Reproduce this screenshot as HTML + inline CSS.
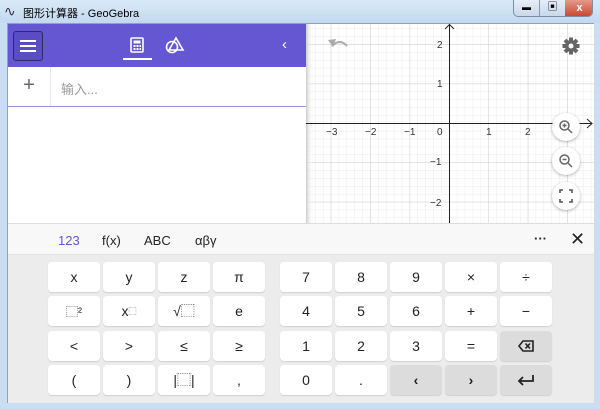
<!DOCTYPE html>
<html><head><meta charset="utf-8"><style>
*{margin:0;padding:0;box-sizing:border-box}
body{width:600px;height:409px;overflow:hidden;background:#c9def3;font-family:"Liberation Sans","Noto Sans CJK SC",sans-serif;position:relative}
.a{position:absolute}
.k{position:absolute;width:52px;height:30px;background:#fff;border-radius:4px;box-shadow:0 1px 1px rgba(0,0,0,.12);font-size:14px;color:#222;display:flex;align-items:center;justify-content:center}
.g{background:#dcdcdc}
.zb{position:absolute;width:28px;height:28px;border-radius:50%;background:#fff;box-shadow:0 1px 3px rgba(0,0,0,.3);display:flex;align-items:center;justify-content:center}
</style></head><body>
<div class="a" style="left:0;top:0;width:600px;height:23px;background:linear-gradient(#d9e9f8,#c3d9f0)"></div>
<div class="a" style="left:4px;top:3px;font-size:14px;color:#334">∿</div>
<div class="a" style="left:23px;top:5px;font-size:11px;color:#000">图形计算器 - GeoGebra</div>
<div class="a" style="left:513px;top:0;width:80px;height:17px;border:1px solid #7c8ea6;border-top:none;border-radius:0 0 5px 5px;background:linear-gradient(#e6eef8,#c9d8ea);overflow:hidden">
<div class="a" style="left:0;top:0;width:26px;height:17px;border-right:1px solid #8899b0;font-size:9px;text-align:center;line-height:15px">▬</div>
<div class="a" style="left:26px;top:0;width:25px;height:17px;font-size:10px;text-align:center;line-height:16px">▣</div>
<div class="a" style="left:51px;top:0;width:29px;height:17px;background:linear-gradient(#e69a8a,#c8442c);color:#fff;font-weight:bold;font-size:11px;text-align:center;line-height:16px">x</div></div>
<div class="a" style="left:7px;top:23px;width:587px;height:380px;background:#fff;border:1px solid #8aa4c0"></div>
<div class="a" style="left:8px;top:24px;width:298px;height:43px;background:#6557d2"></div>
<div class="a" style="left:13px;top:31px;width:30px;height:30px;border:1px solid #2f2a66;border-radius:3px;background:#5a4dc4"></div>
<div class="a" style="left:20px;top:40px;width:16px;height:2px;background:#fff;box-shadow:0 5px 0 #fff,0 10px 0 #fff"></div>
<svg class="a" style="left:130px;top:37px" width="14" height="16"><rect x="1" y="1" width="12" height="14" rx="1" fill="none" stroke="#fff" stroke-width="1.6"/><rect x="3.5" y="3.5" width="7" height="3" fill="#fff"/><g fill="#fff"><rect x="3.5" y="8" width="2" height="2"/><rect x="6.5" y="8" width="2" height="2"/><rect x="9.5" y="8" width="1.5" height="2"/><rect x="3.5" y="11" width="2" height="2"/><rect x="6.5" y="11" width="2" height="2"/><rect x="9.5" y="11" width="1.5" height="2"/></g></svg>
<div class="a" style="left:123px;top:58px;width:29px;height:2px;background:#fff"></div>
<svg class="a" style="left:165px;top:36px" width="20" height="18"><circle cx="7" cy="11" r="5.5" fill="none" stroke="#fff" stroke-width="1.6"/><path d="M11 2 L18 14 L4 14 Z" fill="none" stroke="#fff" stroke-width="1.6"/></svg>
<div class="a" style="left:282px;top:36px;color:#fff;font-size:15px">‹</div>
<div class="a" style="left:8px;top:67px;width:43px;height:39px;border-right:1px solid #e6e6e6;text-align:center;font-size:20px;color:#666;line-height:37px">+</div>
<div class="a" style="left:61px;top:79px;font-size:13px;color:#999">输入...</div>
<div class="a" style="left:8px;top:106px;width:298px;height:1px;background:#9a90e0"></div>
<svg class="a" style="left:306px;top:24px" width="288" height="199">
<defs>
<pattern id="mi" x="24.8" y="20.2" width="7.88" height="7.88" patternUnits="userSpaceOnUse"><path d="M0 0V7.88M0 0H7.88" stroke="#ebebeb" stroke-width="1" fill="none"/></pattern>
<pattern id="ma" x="24.8" y="20.2" width="39.4" height="39.4" patternUnits="userSpaceOnUse"><path d="M0 0V39.4M0 0H39.4" stroke="#cfcfcf" stroke-width="1" fill="none"/></pattern>
<linearGradient id="sh" x1="0" x2="1"><stop offset="0" stop-color="#ccc"/><stop offset="1" stop-color="#fff" stop-opacity="0"/></linearGradient>
</defs>
<rect width="288" height="199" fill="#fff"/>
<rect width="288" height="199" fill="url(#mi)"/>
<rect width="288" height="199" fill="url(#ma)"/>
<rect width="7" height="199" fill="url(#sh)"/>
<line x1="0" y1="99.5" x2="286" y2="99.5" stroke="#222" stroke-width="1"/>
<line x1="143.5" y1="0" x2="143.5" y2="199" stroke="#222" stroke-width="1"/>
<path d="M281 95 L286 99.5 L281 104 M139 5 L143.5 0.5 L148 5" stroke="#222" fill="none"/>
<g font-size="10" fill="#333" font-family="Liberation Sans">
<text x="20" y="111">−3</text><text x="59" y="111">−2</text><text x="98" y="111">−1</text><text x="131" y="111">0</text><text x="180" y="111">1</text><text x="219" y="111">2</text>
<text x="131" y="24">2</text><text x="131" y="63">1</text><text x="124" y="141">−1</text><text x="124" y="182">−2</text>
</g>
<path d="M26 22 Q34 14 41 22" stroke="#aaa" stroke-width="2" fill="none"/><path d="M22 16 L27 23 L30 15 Z" fill="#aaa"/>
<g transform="translate(265,22)" fill="#666"><circle r="6"/>
<rect x="-2" y="-8.5" width="4" height="17"/><rect x="-2" y="-8.5" width="4" height="17" transform="rotate(45)"/><rect x="-2" y="-8.5" width="4" height="17" transform="rotate(90)"/><rect x="-2" y="-8.5" width="4" height="17" transform="rotate(135)"/>
<circle r="2.5" fill="#fff"/></g>
</svg>
<div class="zb" style="left:552px;top:113px"><svg width="16" height="16"><circle cx="6.5" cy="6.5" r="4.5" fill="none" stroke="#666" stroke-width="1.5"/><path d="M10 10 L14 14 M4.5 6.5H8.5M6.5 4.5V8.5" stroke="#666" stroke-width="1.5"/></svg></div>
<div class="zb" style="left:552px;top:147px"><svg width="16" height="16"><circle cx="6.5" cy="6.5" r="4.5" fill="none" stroke="#666" stroke-width="1.5"/><path d="M10 10 L14 14 M4.5 6.5H8.5" stroke="#666" stroke-width="1.5"/></svg></div>
<div class="zb" style="left:552px;top:182px"><svg width="14" height="14"><path d="M1 4V1H4M10 1H13V4M13 10V13H10M4 13H1V10" stroke="#555" stroke-width="1.6" fill="none"/></svg></div>
<div class="a" style="left:8px;top:223px;width:586px;height:32px;background:#f8f8f8;border-top:1px solid #ddd;border-bottom:1px solid #e4e4e4"></div>
<div class="a" style="left:58px;top:233px;font-size:13px;color:#6557d2">123</div>
<div class="a" style="left:102px;top:233px;font-size:13px;color:#222">f(x)</div>
<div class="a" style="left:144px;top:233px;font-size:13px;color:#222">ABC</div>
<div class="a" style="left:195px;top:233px;font-size:13px;color:#222">αβγ</div>
<div class="a" style="left:534px;top:231px;font-size:13px;color:#222;font-weight:bold">···</div>
<div class="a" style="left:570px;top:229px;font-size:18px;color:#222">✕</div>
<div class="a" style="left:8px;top:255px;width:586px;height:148px;background:#ececec"></div>
<div class="k" style="left:48px;top:262px">x</div><div class="k" style="left:103px;top:262px">y</div><div class="k" style="left:158px;top:262px">z</div><div class="k" style="left:213px;top:262px">π</div>
<div class="k" style="left:48px;top:296px;font-size:12px">⬚²</div><div class="k" style="left:103px;top:296px">x<sup style="font-size:8px">⬚</sup></div><div class="k" style="left:158px;top:296px">√⬚</div><div class="k" style="left:213px;top:296px">e</div>
<div class="k" style="left:48px;top:331px">&lt;</div><div class="k" style="left:103px;top:331px">&gt;</div><div class="k" style="left:158px;top:331px">≤</div><div class="k" style="left:213px;top:331px">≥</div>
<div class="k" style="left:48px;top:365px">(</div><div class="k" style="left:103px;top:365px">)</div><div class="k" style="left:158px;top:365px">|⬚|</div><div class="k" style="left:213px;top:365px">,</div>
<div class="k" style="left:280px;top:262px">7</div><div class="k" style="left:335px;top:262px">8</div><div class="k" style="left:390px;top:262px">9</div><div class="k" style="left:445px;top:262px">×</div><div class="k" style="left:500px;top:262px">÷</div>
<div class="k" style="left:280px;top:296px">4</div><div class="k" style="left:335px;top:296px">5</div><div class="k" style="left:390px;top:296px">6</div><div class="k" style="left:445px;top:296px">+</div><div class="k" style="left:500px;top:296px">−</div>
<div class="k" style="left:280px;top:331px">1</div><div class="k" style="left:335px;top:331px">2</div><div class="k" style="left:390px;top:331px">3</div><div class="k" style="left:445px;top:331px">=</div>
<div class="k g" style="left:500px;top:331px"><svg width="16" height="12"><path d="M5 1H15V11H5L1 6Z" fill="none" stroke="#222" stroke-width="1.6"/><path d="M7.5 3.5L12 8.5M12 3.5L7.5 8.5" stroke="#222" stroke-width="1.6"/></svg></div>
<div class="k" style="left:280px;top:365px">0</div><div class="k" style="left:335px;top:365px">.</div>
<div class="k g" style="left:390px;top:365px;font-weight:bold">‹</div><div class="k g" style="left:445px;top:365px;font-weight:bold">›</div>
<div class="k g" style="left:500px;top:365px"><svg width="18" height="12"><path d="M16 1V7H2M6 3L2 7L6 11" fill="none" stroke="#222" stroke-width="1.8"/></svg></div>
</body></html>
